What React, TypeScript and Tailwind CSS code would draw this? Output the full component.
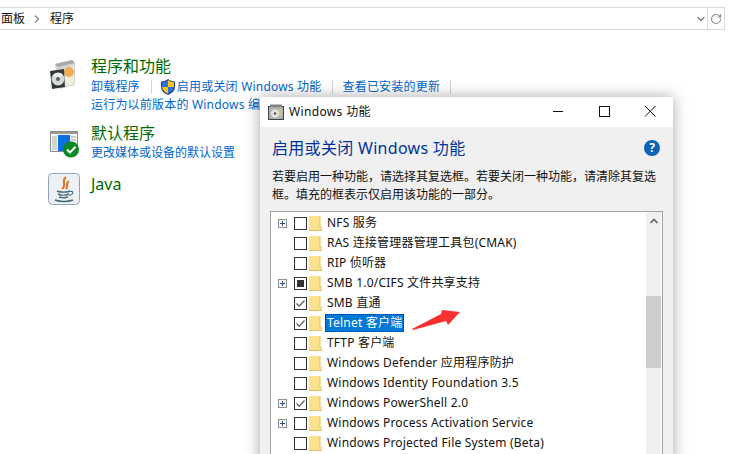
import { ChevronDown, RotateCw } from "lucide-react";

const FONT = "font-['Noto_Sans','Noto_Sans_CJK_SC',sans-serif]";

type Feature = {
	label: string;
	expand?: boolean;
	state?: "on" | "partial";
	selected?: boolean;
};

const features: Feature[] = [
	{ label: "NFS 服务", expand: true },
	{ label: "RAS 连接管理器管理工具包(CMAK)" },
	{ label: "RIP 侦听器" },
	{ label: "SMB 1.0/CIFS 文件共享支持", expand: true, state: "partial" },
	{ label: "SMB 直通", state: "on" },
	{ label: "Telnet 客户端", state: "on", selected: true },
	{ label: "TFTP 客户端" },
	{ label: "Windows Defender 应用程序防护" },
	{ label: "Windows Identity Foundation 3.5" },
	{ label: "Windows PowerShell 2.0", expand: true, state: "on" },
	{ label: "Windows Process Activation Service", expand: true },
	{ label: "Windows Projected File System (Beta)" },
];

function ProgramsIcon() {
	return (
		<svg width="26" height="31" viewBox="0 0 26 31">
			<path d="M5 5 L22 1 L25 4 L25 26 L9 30 Z" fill="#d6d6d0" />
			<path d="M5 5 L22 1 L25 4 L8 8 Z" fill="#a9aaa6" />
			<path d="M13 10 L24 7 L24 25 L13 28 Z" fill="#f1ece0" />
			<circle cx="19" cy="13" r="5" fill="#f0ab55" />
			<path d="M0 12 L14 10 L15 28 L2 30 Z" fill="#33373a" />
			<circle cx="8" cy="20" r="6.5" fill="#d3dad8" />
			<path d="M8 20 L3 16 A6.5 6.5 0 0 1 13 16 Z" fill="#eef2f1" />
			<circle cx="8" cy="20" r="2" fill="#5b6063" />
		</svg>
	);
}

function DefaultsIcon() {
	return (
		<svg width="30" height="27" viewBox="0 0 30 27">
			<rect x="0.5" y="0.5" width="27" height="20" fill="#f4f6f8" stroke="#8b8b8b" />
			<rect x="1" y="1" width="26" height="2" fill="#9a9a9a" />
			<rect x="2" y="5" width="5" height="14" fill="#d0d3d6" />
			<rect x="8" y="4" width="12" height="16" fill="#0a6fe0" />
			<path d="M21 6h5M21 9h5M21 12h5" stroke="#9a9ea3" />
			<circle cx="21" cy="18.5" r="8" fill="#0b8a24" />
			<path d="M17 18.5 L20 21.5 L25.5 15.8" fill="none" stroke="#fff" strokeWidth="2" />
		</svg>
	);
}

function JavaIcon() {
	return (
		<svg width="32" height="32" viewBox="0 0 32 32">
			<rect x="0.5" y="0.5" width="31" height="31" rx="4" fill="#eef1f3" stroke="#8fa6b5" />
			<path d="M18 4 C12 9 20 11 14 16 M21 8 C17 11 21 13 18 16" fill="none" stroke="#e2742a" strokeWidth="2" />
			<path d="M9 18 C12 19.5 19 19.5 22 18 M10 21 C13 22.5 18 22.5 21 21 M11 24 C14 25 17 25 20 24 M7 27 C12 29 20 29 25 27" fill="none" stroke="#45697f" strokeWidth="1.4" />
			<path d="M22 18.5 C26 17.5 26 21.5 21 22.5" fill="none" stroke="#45697f" strokeWidth="1.1" />
		</svg>
	);
}

function ShieldIcon() {
	return (
		<svg width="14" height="16" viewBox="0 0 14 16" className="shrink-0">
			<path d="M7 0 C5 1.5 3 2.2 0 2.4 L0 8 C0 11.5 3 14.5 7 16 C11 14.5 14 11.5 14 8 L14 2.4 C11 2.2 9 1.5 7 0 Z" fill="#1d3f8f" />
			<path d="M7 1 L7 8 L1 8 L1 3.3 C3.5 3 5.5 2.2 7 1 Z" fill="#2f6fd8" />
			<path d="M7 1 C8.5 2.2 10.5 3 13 3.3 L13 8 L7 8 Z" fill="#f6c21c" />
			<path d="M1 8 L7 8 L7 14.8 C3.8 13.5 1.2 11 1 8 Z" fill="#f6c21c" />
			<path d="M7 8 L13 8 C12.8 11 10.2 13.5 7 14.8 Z" fill="#2f6fd8" />
		</svg>
	);
}

function FolderIcon() {
	return (
		<svg width="13" height="15" viewBox="0 0 13 15" className="shrink-0">
			<path d="M0 0 H11 V12 H13 V15 H0 Z" fill="#fbe08e" />
			<path d="M11 0 V11 H13 V15" fill="none" stroke="#e6c15c" />
			<path d="M0 14.5 H13" stroke="#e6c15c" />
		</svg>
	);
}

function Separator() {
	return <span className="block w-px h-[14px] bg-[#d4d4d4] shrink-0" />;
}

function Expander() {
	return (
		<span className="flex items-center justify-center w-[9px] h-[9px] border border-[#919191] bg-[#f4f4f4] relative">
			<span className="absolute w-[5px] h-px bg-[#2e4d8a]" />
			<span className="absolute w-px h-[5px] bg-[#2e4d8a]" />
		</span>
	);
}

function Checkbox({ state }: { state?: Feature["state"] }) {
	return (
		<span className="flex items-center justify-center w-[13px] h-[13px] border border-[#333] bg-white shrink-0">
			{state === "partial" && <span className="w-[7px] h-[7px] bg-[#333]" />}
			{state === "on" && (
				<svg width="11" height="11" viewBox="0 0 11 11">
					<path d="M1.5 5.5 L4.2 8.2 L9.5 2.5" fill="none" stroke="#555" strokeWidth="1.2" />
				</svg>
			)}
		</span>
	);
}

function FeatureRow({ item }: { item: Feature }) {
	return (
		<div className="flex items-center h-5 pl-[7px]">
			<span className="w-[16px] shrink-0">{item.expand && <Expander />}</span>
			<Checkbox state={item.state} />
			<span className="ml-[2px]">
				<FolderIcon />
			</span>
			<span
				className={
					item.selected
						? "ml-[3px] pl-[1px] pr-[1px] h-[18px] leading-[16px] border border-dotted border-[#222] bg-[#0078d7] text-white whitespace-nowrap"
						: "ml-[5px] whitespace-nowrap text-[#111]"
				}>
				{item.label}
			</span>
		</div>
	);
}

function WindowsFeaturesDialog() {
	return (
		<div className="absolute left-[260px] top-[97px] w-[413px] h-[420px] bg-[#f0f0f0] shadow-[0_0_14px_rgba(0,0,0,0.35)]">
			<div className="flex items-center h-[30px] bg-white pl-[8px]">
				<svg width="16" height="16" viewBox="0 0 16 16">
					<rect x="0.5" y="2.5" width="15" height="13" fill="#aab0ab" stroke="#3f4347" />
					<rect x="2" y="0.5" width="12" height="2.5" fill="#7d827f" />
					<circle cx="7" cy="9.5" r="4.2" fill="#dfe3df" />
					<circle cx="7" cy="9.5" r="1.2" fill="#4a4e50" />
					<rect x="11" y="5" width="3" height="7" fill="#d9c27a" />
				</svg>
				<span className="ml-[5px] text-[12px] text-[#111] tracking-[0.35px]">Windows 功能</span>
				<div className="ml-auto flex items-center">
					<svg width="46" height="30" viewBox="0 0 46 30">
						<path d="M18 14.5 H28" stroke="#111" />
					</svg>
					<svg width="46" height="30" viewBox="0 0 46 30">
						<rect x="18.5" y="9.5" width="10" height="10" fill="none" stroke="#111" />
					</svg>
					<svg width="46" height="30" viewBox="0 0 46 30">
						<path d="M18 9 L28.5 19.5 M28.5 9 L18 19.5" stroke="#111" />
					</svg>
				</div>
			</div>

			<div className="pt-[10px] px-[12px] relative">
				<div className="flex items-center justify-between pr-px">
					<h2 className="text-[16px] leading-[22px] text-[#003399] tracking-[0.3px]">启用或关闭 Windows 功能</h2>
					<span className="flex items-center justify-center w-4 h-4 rounded-full bg-[#0b62b8] text-white text-[12px] leading-none font-bold">?</span>
				</div>
				<p className="mt-[9px] text-[12px] leading-[18px] w-[386px] text-[#111]">
					若要启用一种功能，请选择其复选框。若要关闭一种功能，请清除其复选框。填充的框表示仅启用该功能的一部分。
				</p>
				<div className="mt-[7px] -mx-[2px] w-[393px] h-[260px] border border-[#a0a0a0] bg-white flex text-[12px] tracking-[0.2px]">
					<div className="flex-1 pt-px overflow-hidden">
						{features.map((item) => (
							<FeatureRow key={item.label} item={item} />
						))}
					</div>
					<div className="w-[15px] mr-px bg-[#f0f0f0] flex flex-col items-center">
						<svg width="10" height="6" viewBox="0 0 10 6" className="mt-[6px]">
							<path d="M1.5 5 L5 1.5 L8.5 5" fill="none" stroke="#606060" strokeWidth="1.6" />
						</svg>
						<div className="mt-[72px] w-full h-[72px] bg-[#cdcdcd]" />
					</div>
				</div>
			</div>
		</div>
	);
}

export default function App() {
	return (
		<div className={`relative w-[732px] h-[454px] overflow-hidden bg-white text-[12px] ${FONT}`}>
			<div className="pt-[7px] pr-[7px]">
				<div className="flex items-center h-[23px] border-y border-r border-[#d9d9d9] text-[#111]">
					<span className="pl-px text-[12px]">面板</span>
					<svg width="6" height="8" viewBox="0 0 6 8" className="ml-[9px]">
						<path d="M1 0.5 L4.5 4 L1 7.5" fill="none" stroke="#888" strokeWidth="1.4" />
					</svg>
					<span className="ml-[10px]">程序</span>
					<ChevronDown size={12} strokeWidth={2.5} className="ml-auto text-[#777]" />
					<span className="w-px h-full bg-[#d9d9d9]" />
					<RotateCw size={12} strokeWidth={2.2} className="mx-[2px] text-[#8a8a8a]" />
				</div>
			</div>

			<div className="pt-[25px] text-[12px]">
				<div className="flex">
					<div className="w-[91px] pl-[50px] pt-[4px] shrink-0">
						<ProgramsIcon />
					</div>
					<div>
						<div className="text-[16px] leading-[22px] text-[#006a00]">程序和功能</div>
						<div className="flex items-center h-[18px] mt-[1px] text-[#0066cc] tracking-[0.2px] whitespace-nowrap">
							<span>卸载程序</span>
							<span className="ml-[11px]"><Separator /></span>
							<span className="ml-[9px] mr-[3px]"><ShieldIcon /></span>
							<span className="-ml-px">启用或关闭 Windows 功能</span>
							<span className="ml-[10px]"><Separator /></span>
							<span className="ml-[10px]">查看已安装的更新</span>
							<span className="ml-[10px]"><Separator /></span>
						</div>
						<div className="leading-[18px] text-[#0066cc] tracking-[0.2px] whitespace-nowrap">运行为以前版本的 Windows 编</div>
					</div>
				</div>

				<div className="flex mt-[8px]">
					<div className="w-[91px] pl-[50px] pt-[9px] shrink-0">
						<DefaultsIcon />
					</div>
					<div>
						<div className="text-[16px] leading-[22px] text-[#006a00]">默认程序</div>
						<div className="leading-[18px] text-[#0066cc]">更改媒体或设备的默认设置</div>
					</div>
				</div>

				<div className="flex mt-[11px]">
					<div className="w-[91px] pl-[48px] shrink-0">
						<JavaIcon />
					</div>
					<div className="text-[16px] leading-[22px] text-[#006a00]">Java</div>
				</div>
			</div>

			<WindowsFeaturesDialog />

			<svg width="50" height="24" viewBox="0 0 50 24" className="absolute left-[411px] top-[308px]">
				<path d="M1 21 L30 6 L31 2 L49 4 L37 17 L35 13 L2 22 Z" fill="#fb3030" />
			</svg>
		</div>
	);
}
